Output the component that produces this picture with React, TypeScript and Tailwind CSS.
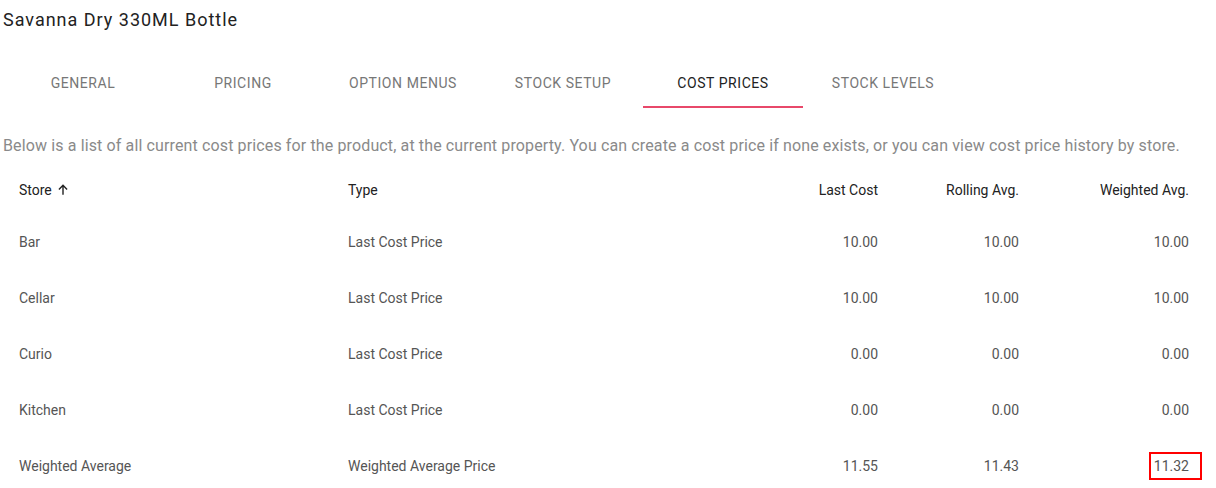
import React from 'react';

const tabs = ['General', 'Pricing', 'Option Menus', 'Stock Setup', 'Cost Prices', 'Stock Levels'];

const rows = [
    { store: 'Bar', type: 'Last Cost Price', last: '10.00', rolling: '10.00', weighted: '10.00' },
    { store: 'Cellar', type: 'Last Cost Price', last: '10.00', rolling: '10.00', weighted: '10.00' },
    { store: 'Curio', type: 'Last Cost Price', last: '0.00', rolling: '0.00', weighted: '0.00' },
    { store: 'Kitchen', type: 'Last Cost Price', last: '0.00', rolling: '0.00', weighted: '0.00' },
    { store: 'Weighted Average', type: 'Weighted Average Price', last: '11.55', rolling: '11.43', weighted: '11.32', flagged: true },
];

export default function App() {
    const active = 'Cost Prices';

    return (
        <div className="bg-white w-[1216px] h-[488px] overflow-hidden px-[3px] text-[#333]" style={{ fontFamily: 'Roboto, "Noto Sans", sans-serif' }}>
            <h1 className="pt-[8px] h-[40px] text-[18px] leading-[24px] tracking-[0.055em] text-[#222]">Savanna Dry 330ML Bottle</h1>

            <div className="flex mt-[20px]">
                {tabs.map(t => (
                    <div
                        key={t}
                        className={`w-[160px] h-[48px] flex items-center justify-center uppercase text-[14px] tracking-[0.04em] border-b-2 ${t === active ? 'border-[#e8486a] text-[#222]' : 'border-transparent text-[#777]'}`}
                    >
                        {t}
                    </div>
                ))}
            </div>

            <p className="mt-[26px] text-[16px] leading-[24px] tracking-[0.008em] text-[#8a8a8a]">
                Below is a list of all current cost prices for the product, at the current property. You can create a cost price if none exists, or you can view cost price history by store.
            </p>

            <table className="mt-[8px] w-[1202px] text-[14px] border-collapse">
                <thead>
                    <tr className="h-[48px] text-[#222]">
                        <th className="pl-4 text-left font-normal w-[345px]">
                            <span className="inline-flex items-center gap-1">
                                Store
                                <svg width="14" height="14" viewBox="0 0 24 24" fill="none" stroke="currentColor" strokeWidth="2.4">
                                    <path d="M12 20V5M5 11l7-7 7 7" />
                                </svg>
                            </span>
                        </th>
                        <th className="text-left font-normal">Type</th>
                        <th className="text-right font-normal w-[200px]">Last Cost</th>
                        <th className="text-right font-normal w-[141px]">Rolling Avg.</th>
                        <th className="text-right font-normal pr-4 w-[186px]">Weighted Avg.</th>
                    </tr>
                </thead>
                <tbody>
                    {rows.map(r => (
                        <tr key={r.store} className="h-[56px] text-[#555]">
                            <td className="pl-4">{r.store}</td>
                            <td>{r.type}</td>
                            <td className="text-right">{r.last}</td>
                            <td className="text-right">{r.rolling}</td>
                            <td className="text-right pr-4">
                                {r.flagged ? (
                                    <span className="inline-block border-2 border-[#ff0000] pl-[3px] pr-[11px] -mr-[13px] leading-[24px]">{r.weighted}</span>
                                ) : r.weighted}
                            </td>
                        </tr>
                    ))}
                </tbody>
            </table>
        </div>
    );
}
